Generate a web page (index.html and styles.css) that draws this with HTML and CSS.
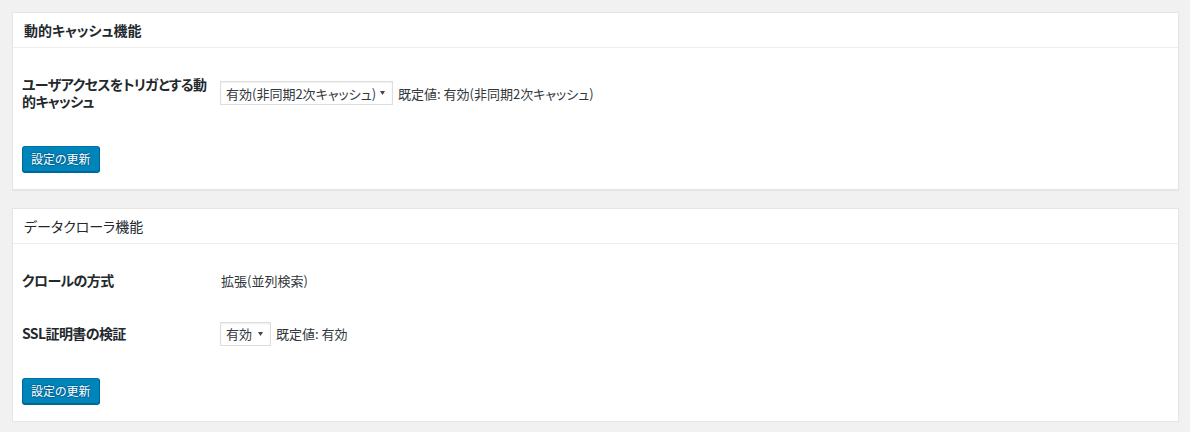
FILE: index.html
```html
<!DOCTYPE html>
<html lang="ja">
<head>
<meta charset="utf-8">
<title>設定</title>
<link rel="stylesheet" href="styles.css">
</head>
<body>
<div class="wrap">
  <section class="postbox">
    <h2 class="hndle">動的キャッシュ機能</h2>
    <div class="inside">
      <div class="form-row">
        <div class="th">ユーザアクセスをトリガとする動的キャッシュ</div>
        <div class="td">
          <div class="select select-wide">
            <span class="select-text">有効(非同期2次キャッシュ)</span>
            <svg class="arrow" width="5" height="4" viewBox="0 0 5 4"><path d="M0 0H5L2.5 4Z" fill="#444"/></svg>
          </div>
          <span class="default">既定値: 有効(非同期2次キャッシュ)</span>
        </div>
      </div>
      <button class="button-primary">設定の更新</button>
    </div>
  </section>

  <section class="postbox">
    <h2 class="hndle hndle-light">データクローラ機能</h2>
    <div class="inside">
      <div class="form-row">
        <div class="th">クロールの方式</div>
        <div class="td"><span class="value">拡張(並列検索)</span></div>
      </div>
      <div class="form-row">
        <div class="th">SSL証明書の検証</div>
        <div class="td">
          <div class="select select-small">
            <span class="select-text">有効</span>
            <svg class="arrow" width="5" height="4" viewBox="0 0 5 4"><path d="M0 0H5L2.5 4Z" fill="#444"/></svg>
          </div>
          <span class="default">既定値: 有効</span>
        </div>
      </div>
      <button class="button-primary">設定の更新</button>
    </div>
  </section>
</div>
</body>
</html>
```

FILE: styles.css
```css
html, body {
  margin: 0;
  padding: 0;
  background: #f1f1f1;
}

body {
  font-family: "Noto Sans CJK JP", "Noto Sans", sans-serif;
  font-feature-settings: "palt";
  color: #444;
  font-size: 13px;
}

.wrap {
  padding: 12px 11px 0 12px;
  display: flex;
  flex-direction: column;
  gap: 18px;
}

.postbox {
  background: #fff;
  border: 1px solid #e5e5e5;
  box-shadow: 0 1px 1px rgba(0, 0, 0, 0.04);
}

.hndle {
  margin: 0;
  height: 34px;
  line-height: 34px;
  padding: 0 11px;
  font-size: 14px;
  font-weight: 700;
  color: #23282d;
  border-bottom: 1px solid #eee;
}

.hndle-light {
  font-weight: 400;
}

.inside {
  padding: 10px 9px 17px 9px;
  display: flex;
  flex-direction: column;
  align-items: flex-start;
}

.form-row {
  display: flex;
  align-items: center;
  align-self: stretch;
}

.th {
  width: 189px;
  flex: none;
  padding: 18px 10px 18px 0;
  font-size: 14px;
  line-height: 17px;
  letter-spacing: -0.6px;
  font-weight: 700;
  color: #23282d;
}

.td {
  display: flex;
  align-items: center;
  padding: 14px 0;
  line-height: 17px;
  color: #32373c;
}

.select {
  box-sizing: border-box;
  height: 24px;
  border: 1px solid #ddd;
  box-shadow: inset 0 1px 2px rgba(0, 0, 0, 0.07);
  background: #fff;
  display: flex;
  align-items: center;
  justify-content: space-between;
  padding: 0 7px 0 5px;
  color: #32373c;
  font-size: 13px;
  margin-left: -1px;
}

.select-wide {
  width: 173px;
}

.select-small {
  width: 51px;
}

.arrow {
  flex: none;
}

.default {
  margin-left: 5px;
  color: #32373c;
}

.button-primary {
  margin-top: 18px;
  height: 26px;
  padding: 0 8px 1px;
  font-family: inherit;
  font-feature-settings: "palt";
  font-size: 12px;
  line-height: 24px;
  color: #fff;
  background: #0085ba;
  border: 1px solid;
  border-color: #0073aa #006799 #006799;
  border-radius: 3px;
  box-shadow: 0 1px 0 #006799;
  text-shadow: 0 -1px 1px #006799, 1px 0 1px #006799, 0 1px 1px #006799, -1px 0 1px #006799;
  cursor: pointer;
}
```
